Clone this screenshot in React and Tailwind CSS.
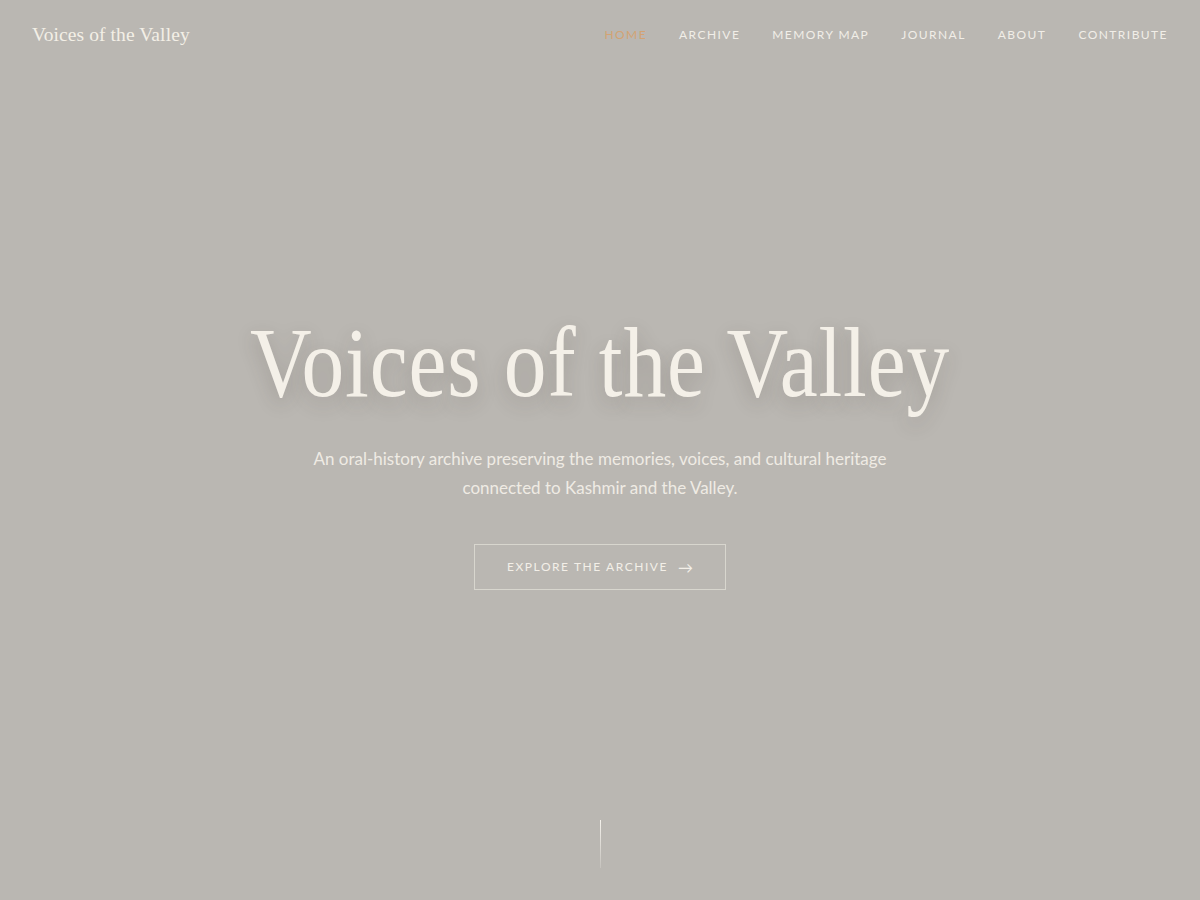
import React from 'react'

const NAV_LINKS = [
  { label: 'Home', active: true },
  { label: 'Archive' },
  { label: 'Memory Map' },
  { label: 'Journal' },
  { label: 'About' },
  { label: 'Contribute' },
]

const SERIF = "font-['Liberation_Serif',serif]"
const SANS = "font-['Lato','Noto_Sans',sans-serif]"

export default function App() {
  return (
    <div className="relative min-h-screen h-[900px] bg-[#bab7b2] overflow-hidden">
      {/* Header */}
      <header className="absolute inset-x-0 top-0 z-10 flex items-center justify-between h-[68px] px-8">
        <a className={`${SERIF} text-[19.5px] text-[#f3efe6] tracking-[0.005em] pt-px`}>Voices of the Valley</a>
        <nav className={`${SANS} flex items-center gap-8 pt-[2px]`}>
          {NAV_LINKS.map(({ label, active }) => (
            <a
              key={label}
              className={`text-[12px] uppercase tracking-[0.12em] ${active ? 'text-[#d3a373]' : 'text-[#f1eee8]'}`}
            >
              {label}
            </a>
          ))}
        </nav>
      </header>

      {/* Hero */}
      <main className="h-full flex flex-col items-center justify-center text-center">
        <h1
          className={`${SERIF} mt-[10px] text-[85.5px] leading-none text-[#f4f0e8] tracking-[0.01em] scale-y-[1.17] [text-shadow:0_6px_18px_rgba(60,50,40,0.22)]`}
        >
          Voices of the Valley
        </h1>
        <p className={`${SANS} mt-[38px] max-w-[600px] text-[17px] leading-[29px] text-[#efebe4]`}>
          An oral-history archive preserving the memories, voices, and cultural heritage connected to Kashmir and the Valley.
        </p>
        <a
          className={`${SANS} mt-[42px] flex items-center gap-[10px] h-[46px] px-8 border border-[#e6e2da]/70 text-[12px] uppercase tracking-[0.13em] text-[#f3efe8]`}
        >
          Explore the Archive
          <span className="text-[15px] tracking-normal">→</span>
        </a>
      </main>

      {/* Scroll indicator */}
      <div className="absolute left-1/2 bottom-[32px] w-px h-[48px] bg-gradient-to-b from-[#f5f2ec] to-[#f5f2ec]/20" />
    </div>
  )
}
